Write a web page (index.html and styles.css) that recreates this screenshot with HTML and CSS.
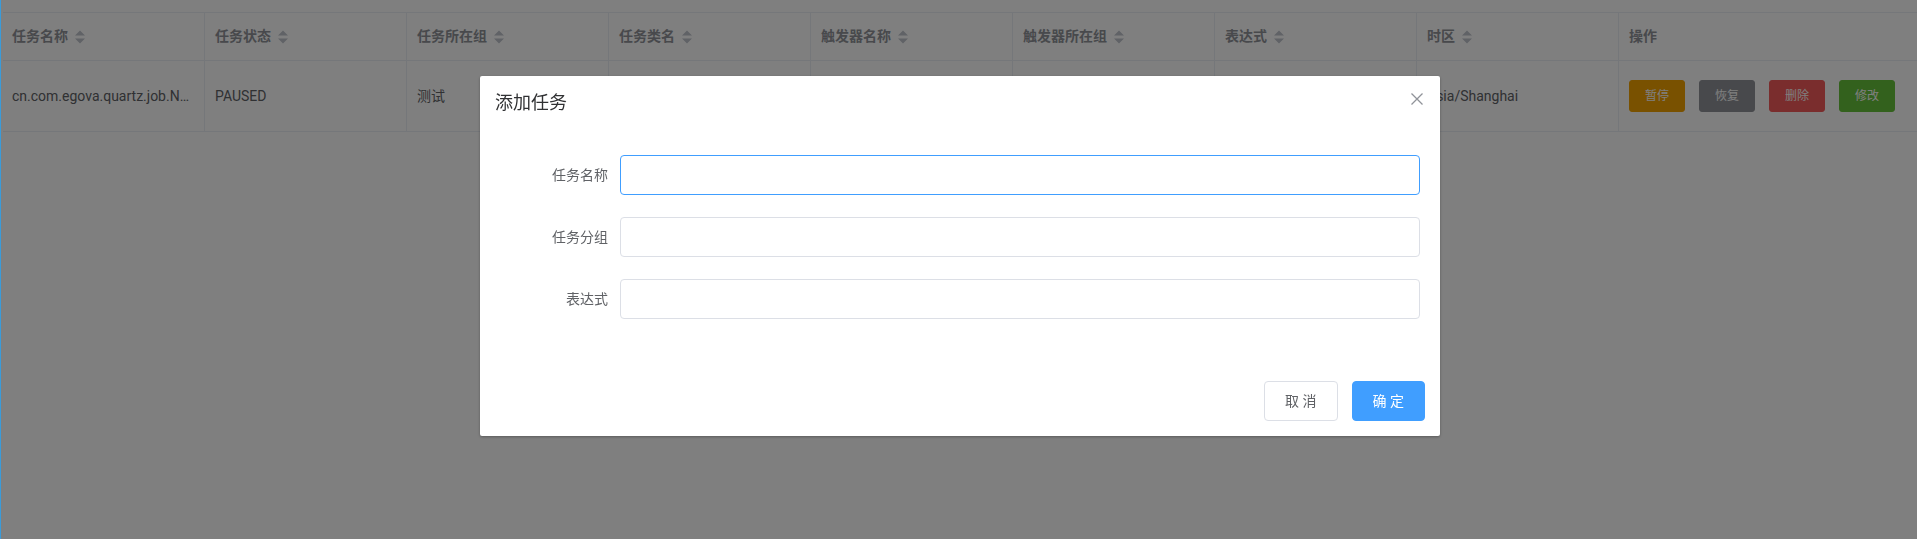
FILE: index.html
```html
<!DOCTYPE html>
<html lang="zh-CN">
<head>
<meta charset="utf-8">
<title>任务管理</title>
<link rel="stylesheet" href="styles.css">
</head>
<body>
<div class="page">
  <table class="grid">
    <colgroup>
      <col class="c"><col class="c"><col class="c"><col class="c"><col class="c"><col class="c"><col class="c"><col class="c"><col class="c-last">
    </colgroup>
    <thead>
      <tr>
        <th><div class="cell">任务名称<svg class="caret" viewBox="0 0 24 14" width="24" height="14"><path d="M7 5.5 12 0.5 17 5.5Z"/><path d="M7 8.5 12 13.5 17 8.5Z"/></svg></div></th>
        <th><div class="cell">任务状态<svg class="caret" viewBox="0 0 24 14" width="24" height="14"><path d="M7 5.5 12 0.5 17 5.5Z"/><path d="M7 8.5 12 13.5 17 8.5Z"/></svg></div></th>
        <th><div class="cell">任务所在组<svg class="caret" viewBox="0 0 24 14" width="24" height="14"><path d="M7 5.5 12 0.5 17 5.5Z"/><path d="M7 8.5 12 13.5 17 8.5Z"/></svg></div></th>
        <th><div class="cell">任务类名<svg class="caret" viewBox="0 0 24 14" width="24" height="14"><path d="M7 5.5 12 0.5 17 5.5Z"/><path d="M7 8.5 12 13.5 17 8.5Z"/></svg></div></th>
        <th><div class="cell">触发器名称<svg class="caret" viewBox="0 0 24 14" width="24" height="14"><path d="M7 5.5 12 0.5 17 5.5Z"/><path d="M7 8.5 12 13.5 17 8.5Z"/></svg></div></th>
        <th><div class="cell">触发器所在组<svg class="caret" viewBox="0 0 24 14" width="24" height="14"><path d="M7 5.5 12 0.5 17 5.5Z"/><path d="M7 8.5 12 13.5 17 8.5Z"/></svg></div></th>
        <th><div class="cell">表达式<svg class="caret" viewBox="0 0 24 14" width="24" height="14"><path d="M7 5.5 12 0.5 17 5.5Z"/><path d="M7 8.5 12 13.5 17 8.5Z"/></svg></div></th>
        <th><div class="cell">时区<svg class="caret" viewBox="0 0 24 14" width="24" height="14"><path d="M7 5.5 12 0.5 17 5.5Z"/><path d="M7 8.5 12 13.5 17 8.5Z"/></svg></div></th>
        <th><div class="cell">操作</div></th>
      </tr>
    </thead>
    <tbody>
      <tr>
        <td><div class="cell">cn.com.egova.quartz.job.NoticeJob</div></td>
        <td><div class="cell">PAUSED</div></td>
        <td><div class="cell">测试</div></td>
        <td><div class="cell">cn.com.egova.quartz.job.NoticeJob</div></td>
        <td><div class="cell">NoticeTrigger</div></td>
        <td><div class="cell">测试</div></td>
        <td><div class="cell">0/5 * * * * ?</div></td>
        <td><div class="cell">Asia/Shanghai</div></td>
        <td>
          <div class="cell actions">
            <button class="btn-s warn">暂停</button>
            <button class="btn-s info">恢复</button>
            <button class="btn-s danger">删除</button>
            <button class="btn-s success">修改</button>
          </div>
        </td>
      </tr>
    </tbody>
  </table>
</div>

<div class="dialog-wrapper">
  <div class="dialog">
    <div class="dialog-header">
      <span class="dialog-title">添加任务</span>
      <button class="dialog-close" aria-label="Close">
        <svg viewBox="0 0 16 16" width="16" height="16"><path d="M2.5 2.5 13.5 13.5M13.5 2.5 2.5 13.5"/></svg>
      </button>
    </div>
    <div class="dialog-body">
      <div class="form-item">
        <label class="form-label">任务名称</label>
        <div class="form-content"><input class="input focused" type="text"></div>
      </div>
      <div class="form-item">
        <label class="form-label">任务分组</label>
        <div class="form-content"><input class="input" type="text"></div>
      </div>
      <div class="form-item">
        <label class="form-label">表达式</label>
        <div class="form-content"><input class="input" type="text"></div>
      </div>
    </div>
    <div class="dialog-footer">
      <button class="btn">取 消</button>
      <button class="btn primary">确 定</button>
    </div>
  </div>
</div>
</body>
</html>
```

FILE: styles.css
```css
* { box-sizing: border-box; }

html, body {
  margin: 0;
  padding: 0;
  background: #fff;
  font-family: Roboto, "Noto Sans CJK SC", sans-serif;
  font-size: 14px;
  color: #606266;
}

.page {
  min-height: 100vh;
  border-left: 1px solid #3a9bd9;
  padding: 12px 0 0 2px;
}

.grid {
  width: 1914px;
  table-layout: fixed;
  border-collapse: separate;
  border-spacing: 0;
  border-top: 1px solid #ebeef5;
}

.grid col.c { width: 202px; }
.grid col.c-last { width: 298px; }

.grid th,
.grid td {
  padding: 0;
  border-right: 1px solid #ebeef5;
  border-bottom: 1px solid #ebeef5;
  text-align: left;
  vertical-align: middle;
}

.grid th:last-child,
.grid td:last-child { border-right: none; }

.grid th {
  height: 48px;
  color: #909399;
  font-weight: bold;
}

.grid td {
  height: 71px;
  color: #606266;
}

.cell {
  padding: 0 10px;
  line-height: 23px;
  white-space: nowrap;
  overflow: hidden;
  text-overflow: ellipsis;
}

.grid th:first-child .cell,
.grid td:first-child .cell { padding-left: 9px; }

.grid th .cell {
  display: flex;
  align-items: center;
}

.caret {
  flex: none;
  fill: #c0c4cc;
}

.actions {
  display: flex;
  gap: 14px;
  overflow: visible;
}

.btn-s {
  font-family: inherit;
  height: 32px;
  width: 56px;
  padding: 0;
  font-size: 12px;
  line-height: 30px;
  color: #fff;
  border-radius: 3px;
  border: 1px solid transparent;
}

.btn-s.warn { background: #f2a200; border-color: #f2a200; }
.btn-s.info { background: #909399; border-color: #909399; }
.btn-s.danger { background: #f45a5a; border-color: #f45a5a; }
.btn-s.success { background: #67c23a; border-color: #67c23a; }

/* dialog */
.dialog-wrapper {
  position: fixed;
  top: 0;
  right: 0;
  bottom: 0;
  left: 1px;
  background: rgba(0, 0, 0, 0.5);
  padding: 76px 0 0 2px;
  display: flex;
  justify-content: center;
  align-items: flex-start;
}

.dialog {
  width: 960px;
  background: #fff;
  border-radius: 2px;
  box-shadow: 0 1px 3px rgba(0, 0, 0, 0.3);
}

.dialog-header {
  position: relative;
  padding: 15px 15px 10px;
}

.dialog-title {
  display: block;
  font-size: 18px;
  line-height: 24px;
  color: #303133;
}

.dialog-close {
  position: absolute;
  top: 15px;
  right: 15px;
  width: 16px;
  height: 16px;
  padding: 0;
  border: none;
  background: transparent;
}

.dialog-close svg {
  display: block;
  stroke: #909399;
  stroke-width: 1.3;
  fill: none;
}

.dialog-body {
  padding: 30px 20px;
}

.form-item {
  display: flex;
  margin-bottom: 22px;
}

.form-label {
  width: 120px;
  flex: none;
  padding-right: 12px;
  text-align: right;
  line-height: 40px;
  font-size: 14px;
  color: #606266;
}

.form-content {
  flex: 1;
}

.input {
  display: block;
  width: 100%;
  height: 40px;
  padding: 0 15px;
  border: 1px solid #dcdfe6;
  border-radius: 4px;
  font-family: inherit;
  font-size: 14px;
  color: #606266;
  outline: none;
  background: #fff;
}

.input.focused { border-color: #409eff; }

.dialog-footer {
  padding: 10px 15px 15px;
  display: flex;
  justify-content: flex-end;
  gap: 14px;
}

.btn {
  height: 40px;
  padding: 0 20px;
  font-family: inherit;
  font-size: 14px;
  line-height: 38px;
  border-radius: 4px;
  border: 1px solid #dcdfe6;
  background: #fff;
  color: #606266;
  white-space: pre;
}

.btn.primary {
  background: #409eff;
  border-color: #409eff;
  color: #fff;
}
```
